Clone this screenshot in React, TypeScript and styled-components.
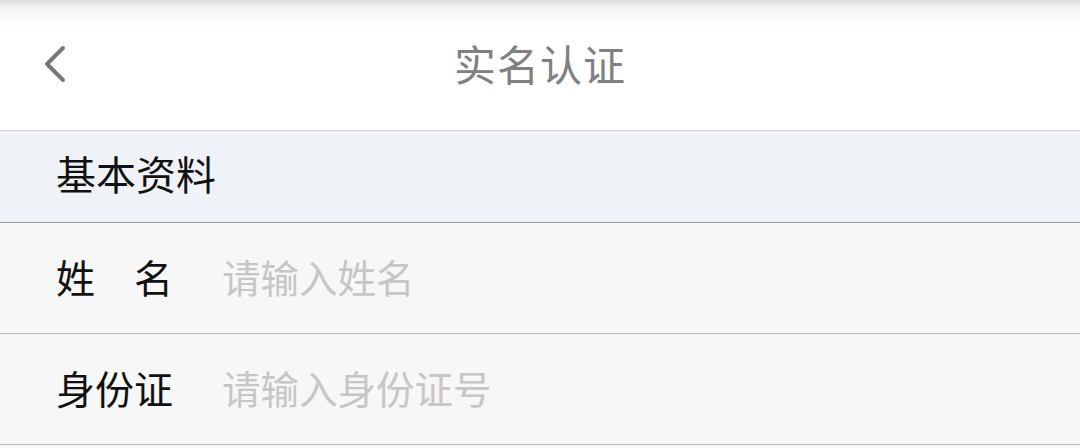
import * as React from "react";
import styled, { createGlobalStyle } from "styled-components";

const GlobalStyle = createGlobalStyle`
  html, body {
    margin: 0;
    padding: 0;
    background: #f7f7f7;
    font-family: "Noto Sans CJK SC", "Noto Sans", sans-serif;
  }
`;

const Page = styled.div`
  width: 1080px;
  height: 448px;
  overflow: hidden;
  background: #f7f7f7;
`;

const Header = styled.header`
  height: 131px;
  background: linear-gradient(#dcdcdc 0px, #f3f3f3 8px, #fdfdfd 24px, #ffffff 30px);
  border-bottom: 1px solid #cfcfcf;
  display: grid;
  grid-template-columns: 120px 1fr 120px;
  align-items: center;
  padding-bottom: 0;
  box-sizing: border-box;
`;

const BackButton = styled.button`
  border: 0;
  background: none;
  padding: 0 0 0 42px;
  display: flex;
  align-items: center;
  height: 40px;
  color: #777;
  cursor: pointer;
`;

const Title = styled.h1`
  margin: 0 0 6px;
  text-align: center;
  font-size: 42px;
  font-weight: 400;
  color: #808080;
  letter-spacing: 1px;
`;

const SectionHeader = styled.div`
  height: 92px;
  box-sizing: border-box;
  background: #eff2f6;
  border-bottom: 1px solid #9a9a9a;
  display: flex;
  align-items: center;
  padding: 0 0 8px 56px;
  font-size: 40px;
  color: #111;
`;

const Row = styled.label`
  height: 111px;
  box-sizing: border-box;
  background: #f7f7f7;
  border-bottom: 1px solid #bdbdbd;
  display: flex;
  align-items: center;
  padding: 0 0 4px 56px;
`;

const Label = styled.span<{ $spread?: boolean }>`
  width: 166px;
  flex-shrink: 0;
  font-size: 39px;
  color: #111;
  letter-spacing: ${(p) => (p.$spread ? "39px" : "0")};
`;

const Input = styled.input`
  flex: 1;
  border: 0;
  outline: none;
  background: transparent;
  font-family: inherit;
  font-size: 38.5px;
  color: #333;
  padding: 0;

  &::placeholder {
    color: #c6c6c6;
  }
`;

export default function App() {
  return (
    <Page>
      <GlobalStyle />
      <Header>
        <BackButton aria-label="返回">
          <svg width="26" height="40" viewBox="0 0 26 40">
            <path
              d="M21 3 L5 19 L21 35"
              fill="none"
              stroke="#777"
              strokeWidth="4"
              strokeLinecap="round"
              strokeLinejoin="round"
            />
          </svg>
        </BackButton>
        <Title>实名认证</Title>
        <span />
      </Header>
      <SectionHeader>基本资料</SectionHeader>
      <Row>
        <Label $spread>姓名</Label>
        <Input placeholder="请输入姓名" />
      </Row>
      <Row>
        <Label>身份证</Label>
        <Input placeholder="请输入身份证号" />
      </Row>
    </Page>
  );
}
